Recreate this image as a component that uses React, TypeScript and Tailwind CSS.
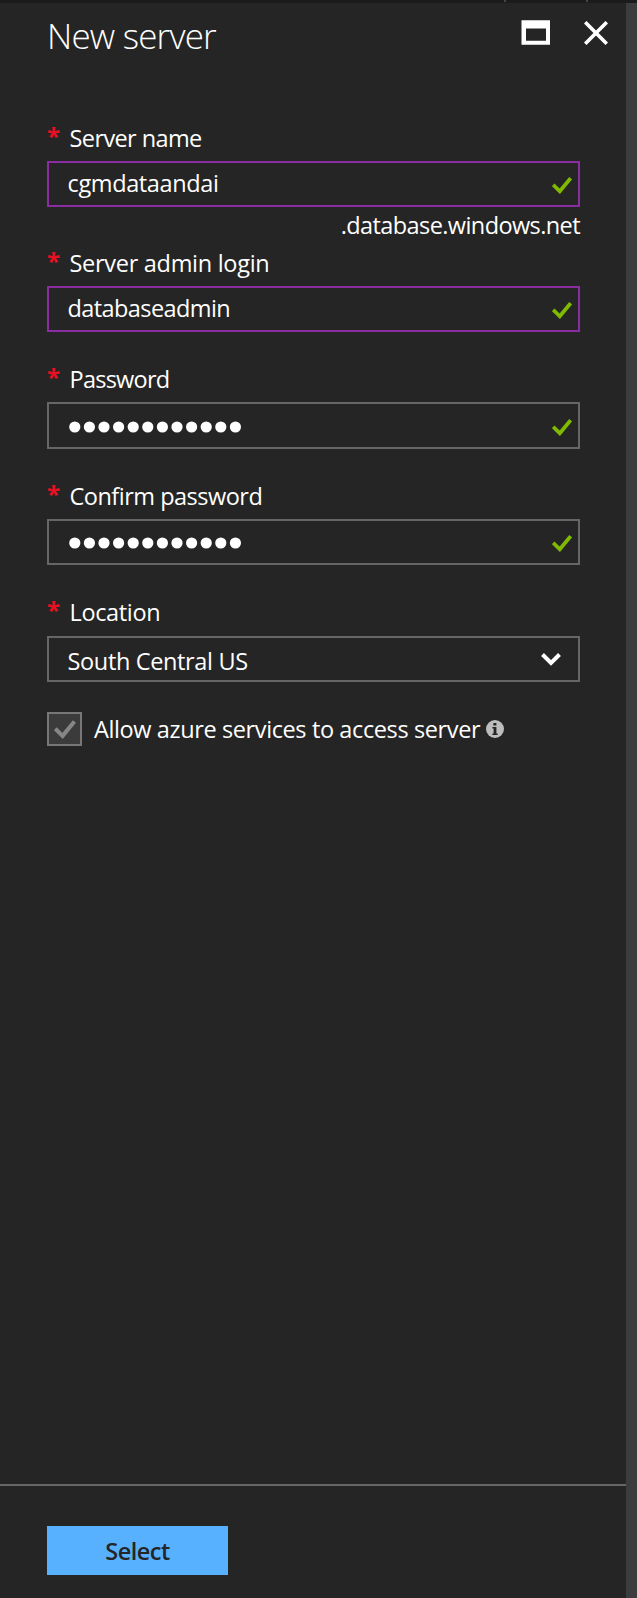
import React from "react";

function Check({ className }: { className: string }) {
  return (
    <svg viewBox="0 0 20 17" className={className} fill="none" stroke="currentColor" strokeWidth="3.7">
      <path d="M1.2 7.8 L7.8 14.3 L18.6 1.2" />
    </svg>
  );
}

function Label({ children, className }: { children: string; className: string }) {
  return (
    <div className="flex h-8 items-start leading-8">
      <span className="-mt-[2px] w-[22.5px] shrink-0 text-[24px] font-bold leading-8 text-[#e81123]">*</span>
      <label className={`whitespace-nowrap ${className}`}>{children}</label>
    </div>
  );
}

function Box({ children, className }: { children: React.ReactNode; className: string }) {
  return (
    <div className={`flex w-[533px] items-center justify-between border-2 pl-[18.5px] ${className}`}>{children}</div>
  );
}

function Dots({ className }: { className: string }) {
  return (
    <svg viewBox="0 0 176 12" className={`h-3 w-[176px] fill-white ${className}`}>
      {Array.from({ length: 12 }, (_, i) => (
        <circle key={i} cx={6.8 + i * 14.6} cy="6" r="5.6" />
      ))}
    </svg>
  );
}

const green = "mr-[6px] mt-[3px] h-[17px] w-5 text-[#7fba00]";

export default function App() {
  return (
    <div className="flex h-[1598px] w-[637px] flex-col bg-[#252525] font-['Open_Sans','Noto_Sans',sans-serif] text-[23.5px] text-white">
      <div className="flex h-[3px] shrink-0 bg-[#1b1b1b] pl-[504px]">
        <i className="h-[2px] w-[2px] bg-[#444]" />
        <i className="ml-20 h-[2px] w-[2px] bg-[#444]" />
      </div>
      <div className="flex min-h-0 flex-1">
        <main className="flex w-[626px] flex-col">
          <header className="flex h-[119px] items-start pl-[47px]">
            <h1 className="mt-[6px] w-[474px] text-[35px] leading-[54px] font-light tracking-[-0.8px]">New server</h1>
            <svg viewBox="0 0 29 25" className="mt-[17px] h-[25px] w-[29px]">
              <path fill="white" fillRule="evenodd" d="M.5 .2h28.5v24.6H.5zM5 8.5v12.2h20V8.5z" />
            </svg>
            <svg viewBox="0 0 24 24" className="mt-[17.5px] ml-[34px] h-6 w-6" stroke="white" strokeWidth="3.6">
              <path d="M1.2 1.2 22.8 22.8M22.8 1.2 1.2 22.8" />
            </svg>
          </header>
          <form className="flex flex-1 flex-col pl-[47px]">
            <Label className="tracking-[-0.6px]">Server name</Label>
            <Box className="mt-[7px] h-[46px] border-[#892da0]">
              <span className="mb-[1px] tracking-[-0.37px]">cgmdataandai</span>
              <Check className={green} />
            </Box>
            <div className="mt-[2px] flex h-[32px] w-[533px] justify-end leading-8">
              <span className="tracking-[-0.59px]">.database.windows.net</span>
            </div>
            <div className="mt-[6px]">
              <Label className="tracking-[-0.29px]">Server admin login</Label>
            </div>
            <Box className="mt-[7px] h-[46px] border-[#892da0]">
              <span className="mb-[1px] tracking-[-0.58px]">databaseadmin</span>
              <Check className={green} />
            </Box>
            <div className="mt-[31px]">
              <Label className="tracking-[-0.75px]">Password</Label>
            </div>
            <Box className="mt-[7px] h-[47px] border-[#666]">
              <Dots className="mt-[3px]" />
              <Check className={green} />
            </Box>
            <div className="mt-[31px]">
              <Label className="tracking-[-0.5px]">Confirm password</Label>
            </div>
            <Box className="mt-[7px] h-[46px] border-[#666]">
              <Dots className="mt-[2px]" />
              <Check className={green} />
            </Box>
            <div className="mt-[31px]">
              <Label className="tracking-[-0.35px]">Location</Label>
            </div>
            <Box className="mt-[8px] h-[46px] border-[#666]">
              <span className="mt-[5px] tracking-[-0.35px]">South Central US</span>
              <svg viewBox="0 0 20 13" className="mr-[17px] h-[13px] w-5" fill="none" stroke="white" strokeWidth="4">
                <path d="M1.5 1.5 10 10 18.5 1.5" />
              </svg>
            </Box>
            <div className="mt-[30px] flex h-[34px] items-center">
              <span className="flex h-[34px] w-[35px] items-center justify-center border-2 border-[#777] bg-[#3b3b3b]">
                <Check className="h-[19px] w-[22px] text-[#868686]" />
              </span>
              <span className="mt-[2px] ml-3 whitespace-nowrap tracking-[-0.385px]">Allow azure services to access server</span>
              <svg viewBox="0 0 18 18" className="ml-[6px] h-[18px] w-[18px]">
                <circle cx="9" cy="9" r="9" fill="#bdbdbd" />
                <path fill="#252525" d="M7.4 3h3v2.6h-3zM6.4 7h4v6.4h1.2V15H6.4v-1.6h1.2V8.6H6.4z" />
              </svg>
            </div>
          </form>
          <footer className="h-[114px] shrink-0 border-t-2 border-[#666] pt-10 pl-[47px]">
            <button className="flex h-[49px] w-[181px] items-center justify-center bg-[#57b1ff] font-semibold text-[#252525]">
              <span className="mt-[2px] tracking-[-0.5px]">Select</span>
            </button>
          </footer>
        </main>
        <aside className="flex-1 bg-[#3c3c3e]" />
      </div>
    </div>
  );
}
